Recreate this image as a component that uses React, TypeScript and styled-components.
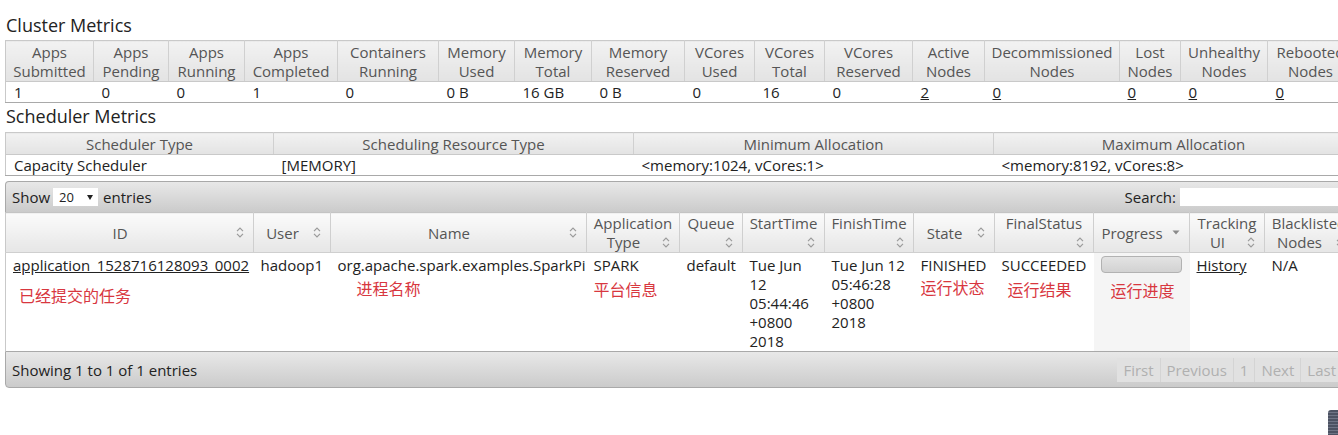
import styled, { createGlobalStyle } from "styled-components";

const GlobalStyle = createGlobalStyle`
  html, body {
    margin: 0;
    padding: 0;
    background: #fff;
    overflow: hidden;
  }
  body {
    font-family: "Open Sans", "Noto Sans CJK SC", sans-serif;
    font-size: 15px;
    color: #222;
  }
`;

const Page = styled.div`
  width: 1348px;
  padding-left: 5px;
`;

const Heading = styled.h3<{ $top: number; $bottom: number }>`
  margin: ${(p) => p.$top}px 0 ${(p) => p.$bottom}px 1px;
  font-size: 18px;
  font-weight: 400;
  line-height: 24px;
  color: #222;
`;

const InfoTable = styled.table`
  width: 1348px;
  table-layout: fixed;
  border-collapse: collapse;
  border: 1px solid #c9c9c9;
  border-bottom-color: #a9a9a9;
`;

const InfoHead = styled.th`
  font-weight: 400;
  color: #555;
  text-align: center;
  padding: 2px 2px 0;
  line-height: 19px;
  white-space: nowrap;
  overflow: hidden;
  background: linear-gradient(#f2f2f2, #e3e3e3);
  border-right: 1px solid #d0d0d0;
  border-bottom: 1px solid #c9c9c9;
`;

const InfoCell = styled.td`
  padding: 0 8px;
  line-height: 20px;
  white-space: nowrap;
  overflow: hidden;
  color: #222;
`;

const Link = styled.a`
  color: #222;
  text-decoration: underline;
  cursor: pointer;
`;

const Wrapper = styled.div`
  width: 1348px;
  margin-top: 5px;
`;

const Toolbar = styled.div`
  display: flex;
  align-items: center;
  justify-content: space-between;
  height: 30px;
  padding-left: 6px;
  border: 1px solid #a9a9a9;
  border-bottom: none;
  border-top-left-radius: 4px;
  background: linear-gradient(#e8e8e8, #cbcbcb);
`;

const Group = styled.div`
  display: flex;
  align-items: center;
  gap: 4px;
`;

const Select = styled.div`
  display: flex;
  align-items: center;
  justify-content: space-between;
  width: 45px;
  height: 18px;
  padding: 0 5px 0 6px;
  box-sizing: border-box;
  background: #fff;
  font-size: 13px;
  margin: 0 1px 0 -1px;
`;

const Caret = styled.span`
  width: 0;
  height: 0;
  border-left: 3.5px solid transparent;
  border-right: 3.5px solid transparent;
  border-top: 5px solid #222;
`;

const SearchInput = styled.div`
  width: 172px;
  height: 18px;
  background: #fff;
`;

const DataTable = styled.table`
  width: 1348px;
  table-layout: fixed;
  border-collapse: collapse;
  border-left: 1px solid #c9c9c9;
`;

const DataHead = styled.th`
  position: relative;
  height: 37px;
  padding: 1px 3px 0;
  box-sizing: border-box;
  font-weight: 400;
  color: #555;
  line-height: 19px;
  text-align: center;
  white-space: nowrap;
  overflow: hidden;
  background: linear-gradient(#fbfbfb, #e6e6e6);
  border-right: 1px solid #cfcfcf;
  border-top: 1px solid #c4c4c4;
  border-bottom: 1px solid #cfcfcf;
`;

const Spacer = styled.span`
  display: inline-block;
  width: 19px;
`;

const SortIcon = styled.svg<{ $low?: boolean }>`
  position: absolute;
  right: 9px;
  ${(p) => (p.$low ? "bottom: 4px;" : "top: 14px;")}
`;

const DataCell = styled.td<{ $sorted?: boolean }>`
  vertical-align: top;
  padding: 3px 7px 0;
  line-height: 19px;
  height: 95px;
  color: #222;
  background: ${(p) => (p.$sorted ? "#f5f5f5" : "#fff")};
`;

const Note = styled.div<{ $gap: number; $indent: number }>`
  margin-top: ${(p) => p.$gap}px;
  margin-left: ${(p) => p.$indent}px;
  font-family: "Noto Sans CJK SC", sans-serif;
  font-size: 16px;
  line-height: 22px;
  color: #d8373f;
  white-space: nowrap;
`;

const Bar = styled.div`
  width: 81px;
  height: 17px;
  box-sizing: border-box;
  border: 1px solid #b2b2b2;
  border-radius: 4px;
  background: linear-gradient(#e3e3e3, #d2d2d2);
`;

const Footer = styled.div`
  display: flex;
  align-items: center;
  justify-content: space-between;
  height: 35px;
  padding: 0 10px 0 6px;
  border: 1px solid #a9a9a9;
  border-bottom-left-radius: 4px;
  background: linear-gradient(#e8e8e8, #cbcbcb);
  color: #222;
`;

const Pager = styled.div`
  display: flex;
  align-items: center;
  height: 24px;
  background: #e1e1e1;
`;

const PageButton = styled.span<{ $first?: boolean }>`
  padding: 0 6px;
  line-height: 24px;
  color: #b0b0b0;
  border-left: ${(p) => (p.$first ? "none" : "1px solid #d4d4d4")};
`;

const Dock = styled.div`
  position: fixed;
  right: 0;
  bottom: 0;
  width: 10px;
  height: 25px;
  border-top-left-radius: 3px;
  background: repeating-linear-gradient(#4c5262 0 2px, #6e7485 2px 3px);
`;

function Sort({ low }: { low?: boolean }) {
  return (
    <SortIcon $low={low} width="8" height="11" viewBox="0 0 8 11">
      <path d="M1 4.2 L4 1.2 L7 4.2 M1 6.8 L4 9.8 L7 6.8" fill="none" stroke="#9a9a9a" strokeWidth="1.2" />
    </SortIcon>
  );
}

function Desc() {
  return (
    <SortIcon width="8" height="11" viewBox="0 0 8 11">
      <path d="M0.5 3.5 L7.5 3.5 L4 7.5 Z" fill="#8a8a8a" />
    </SortIcon>
  );
}

const clusterCols = [88, 75, 76, 93, 101, 76, 77, 93, 70, 70, 88, 72, 135, 61, 87, 86];
const clusterHeads = [
  ["Apps", "Submitted"],
  ["Apps", "Pending"],
  ["Apps", "Running"],
  ["Apps", "Completed"],
  ["Containers", "Running"],
  ["Memory", "Used"],
  ["Memory", "Total"],
  ["Memory", "Reserved"],
  ["VCores", "Used"],
  ["VCores", "Total"],
  ["VCores", "Reserved"],
  ["Active", "Nodes"],
  ["Decommissioned", "Nodes"],
  ["Lost", "Nodes"],
  ["Unhealthy", "Nodes"],
  ["Rebooted", "Nodes"],
];
const clusterValues: { v: string; link?: boolean }[] = [
  { v: "1" }, { v: "0" }, { v: "0" }, { v: "1" }, { v: "0" }, { v: "0 B" }, { v: "16 GB" }, { v: "0 B" },
  { v: "0" }, { v: "16" }, { v: "0" }, { v: "2", link: true }, { v: "0", link: true }, { v: "0", link: true },
  { v: "0", link: true }, { v: "0", link: true },
];

const schedCols = [268, 360, 360, 360];

type Head = { lines: string[]; low?: boolean; desc?: boolean; w: number };
const appHeads: Head[] = [
  { lines: ["ID"], w: 248 },
  { lines: ["User"], w: 77 },
  { lines: ["Name"], w: 256 },
  { lines: ["Application", "Type"], low: true, w: 93 },
  { lines: ["Queue", ""], low: true, w: 63 },
  { lines: ["StartTime", ""], low: true, w: 82 },
  { lines: ["FinishTime", ""], low: true, w: 89 },
  { lines: ["State"], w: 81 },
  { lines: ["FinalStatus", ""], low: true, w: 99 },
  { lines: ["Progress"], desc: true, w: 96 },
  { lines: ["Tracking", "UI"], low: true, w: 75 },
  { lines: ["Blacklisted", "Nodes"], low: true, w: 89 },
];

export default function App() {
  return (
    <Page>
      <GlobalStyle />
      <Heading $top={13} $bottom={3}>Cluster Metrics</Heading>
      <InfoTable>
        <colgroup>
          {clusterCols.map((w, i) => (
            <col key={i} style={{ width: w }} />
          ))}
        </colgroup>
        <thead>
          <tr>
            {clusterHeads.map(([a, b]) => (
              <InfoHead key={a + b}>
                {a}
                <br />
                {b}
              </InfoHead>
            ))}
          </tr>
        </thead>
        <tbody>
          <tr>
            {clusterValues.map((c, i) => (
              <InfoCell key={i}>{c.link ? <Link>{c.v}</Link> : c.v}</InfoCell>
            ))}
          </tr>
        </tbody>
      </InfoTable>

      <Heading $top={1} $bottom={4}>Scheduler Metrics</Heading>
      <InfoTable>
        <colgroup>
          {schedCols.map((w, i) => (
            <col key={i} style={{ width: w }} />
          ))}
        </colgroup>
        <thead>
          <tr>
            <InfoHead>Scheduler Type</InfoHead>
            <InfoHead>Scheduling Resource Type</InfoHead>
            <InfoHead>Minimum Allocation</InfoHead>
            <InfoHead>Maximum Allocation</InfoHead>
          </tr>
        </thead>
        <tbody>
          <tr>
            <InfoCell>Capacity Scheduler</InfoCell>
            <InfoCell>[MEMORY]</InfoCell>
            <InfoCell>&lt;memory:1024, vCores:1&gt;</InfoCell>
            <InfoCell>&lt;memory:8192, vCores:8&gt;</InfoCell>
          </tr>
        </tbody>
      </InfoTable>

      <Wrapper>
        <Toolbar>
          <Group>
            Show
            <Select>
              20
              <Caret />
            </Select>
            entries
          </Group>
          <Group>
            Search:
            <SearchInput />
          </Group>
        </Toolbar>
        <DataTable>
          <colgroup>
            {appHeads.map((h, i) => (
              <col key={i} style={{ width: h.w }} />
            ))}
          </colgroup>
          <thead>
            <tr>
              {appHeads.map((h) => (
                <DataHead key={h.lines[0]}>
                  {h.lines.map((l, i) =>
                    i === h.lines.length - 1 ? (
                      <span key={i}>
                        {l}
                        <Spacer />
                      </span>
                    ) : (
                      <span key={i}>
                        {l}
                        <br />
                      </span>
                    )
                  )}
                  {h.desc ? <Desc /> : <Sort low={h.low} />}
                </DataHead>
              ))}
            </tr>
          </thead>
          <tbody>
            <tr>
              <DataCell>
                <Link>application_1528716128093_0002</Link>
                <Note $gap={9} $indent={6}>已经提交的任务</Note>
              </DataCell>
              <DataCell>hadoop1</DataCell>
              <DataCell>
                org.apache.spark.examples.SparkPi
                <Note $gap={2} $indent={19}>进程名称</Note>
              </DataCell>
              <DataCell>
                SPARK
                <Note $gap={3} $indent={0}>平台信息</Note>
              </DataCell>
              <DataCell>default</DataCell>
              <DataCell>Tue Jun 12 05:44:46 +0800 2018</DataCell>
              <DataCell>Tue Jun 12 05:46:28 +0800 2018</DataCell>
              <DataCell>
                FINISHED
                <Note $gap={1} $indent={0}>运行状态</Note>
              </DataCell>
              <DataCell>
                SUCCEEDED
                <Note $gap={3} $indent={6}>运行结果</Note>
              </DataCell>
              <DataCell $sorted>
                <Bar />
                <Note $gap={6} $indent={10}>运行进度</Note>
              </DataCell>
              <DataCell>
                <Link>History</Link>
              </DataCell>
              <DataCell>N/A</DataCell>
            </tr>
          </tbody>
        </DataTable>
        <Footer>
          <span>Showing 1 to 1 of 1 entries</span>
          <Pager>
            <PageButton $first>First</PageButton>
            <PageButton>Previous</PageButton>
            <PageButton>1</PageButton>
            <PageButton>Next</PageButton>
            <PageButton>Last</PageButton>
          </Pager>
        </Footer>
      </Wrapper>
      <Dock />
    </Page>
  );
}
